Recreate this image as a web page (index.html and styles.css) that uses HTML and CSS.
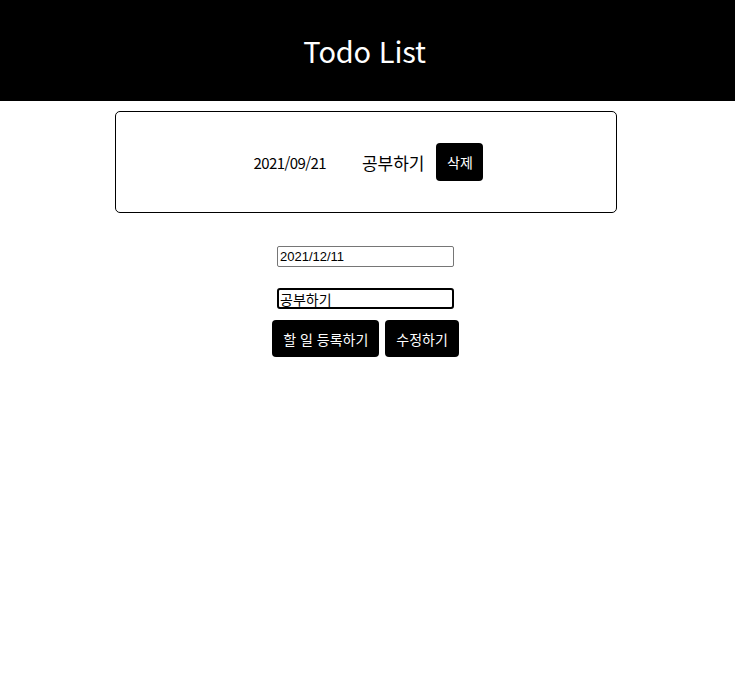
FILE: index.html
```html
<!DOCTYPE html>
<html lang="ko">
<head>
<meta charset="utf-8">
<title>Todo List</title>
<link rel="stylesheet" href="styles.css">
</head>
<body>
<header class="header">
  <h1 class="title">Todo List</h1>
</header>
<main class="main">
  <section class="list">
    <div class="item">
      <span class="item-date">2021/09/21</span>
      <span class="item-text">공부하기</span>
      <button class="btn btn-delete">삭제</button>
    </div>
  </section>
  <form class="form">
    <input class="field" type="text" value="2021/12/11">
    <input class="field field-focus" type="text" value="공부하기">
    <div class="actions">
      <button type="button" class="btn btn-action">할 일 등록하기</button>
      <button type="button" class="btn btn-action">수정하기</button>
    </div>
  </form>
</main>
</body>
</html>
```
FILE: styles.css
```css
* { box-sizing: border-box; }
body {
  margin: 0;
  font-family: "Noto Sans CJK KR", "Noto Sans", sans-serif;
  color: #000;
  background: #fff;
}
.header {
  background: #000;
  height: 101px;
  display: flex;
  align-items: center;
  justify-content: center;
  padding-right: 6px;
}
.title {
  margin: 0;
  color: #fff;
  font-weight: 400;
  font-size: 29px;
  letter-spacing: -0.2px;
  line-height: 1;
}
.main {
  display: flex;
  flex-direction: column;
  align-items: center;
  padding-right: 4px;
}
.list {
  margin-top: 10px;
  width: 502px;
  height: 102px;
  border: 1px solid #000;
  border-radius: 5px;
  display: flex;
  align-items: center;
  justify-content: center;
}
.item {
  display: flex;
  align-items: center;
  font-size: 16px;
  padding-left: 6px;
}
.item-date {
  font-size: 15px;
  letter-spacing: -0.6px;
  margin-right: 36px;
}
.item-text {
  font-size: 17px;
  margin-right: 12px;
}
.btn {
  background: #000;
  color: #fff;
  border: none;
  border-radius: 4px;
  font-family: "Noto Sans CJK KR", "Noto Sans", sans-serif;
  font-size: 14px;
  white-space: nowrap;
  cursor: pointer;
}
.btn-delete {
  height: 38px;
  width: 47px;
  padding: 0;
}
.form {
  margin-top: 33px;
  display: flex;
  flex-direction: column;
  align-items: center;
}
.field {
  width: 177px;
  height: 21px;
  border: 1px solid #767676;
  border-radius: 2px;
  padding: 0 2px;
  font-family: "Liberation Sans", "Noto Sans CJK KR", sans-serif;
  font-size: 13px;
  color: #000;
}
.field + .field { margin-top: 21px; }
.field-focus {
  border: 2px solid #000;
  border-radius: 3px;
  padding: 0 1px;
  outline: none;
  font-size: 14px;
}
.actions {
  margin-top: 11px;
  display: flex;
  gap: 6px;
}
.btn-action {
  height: 37px;
  padding: 0 11px;
}
```
